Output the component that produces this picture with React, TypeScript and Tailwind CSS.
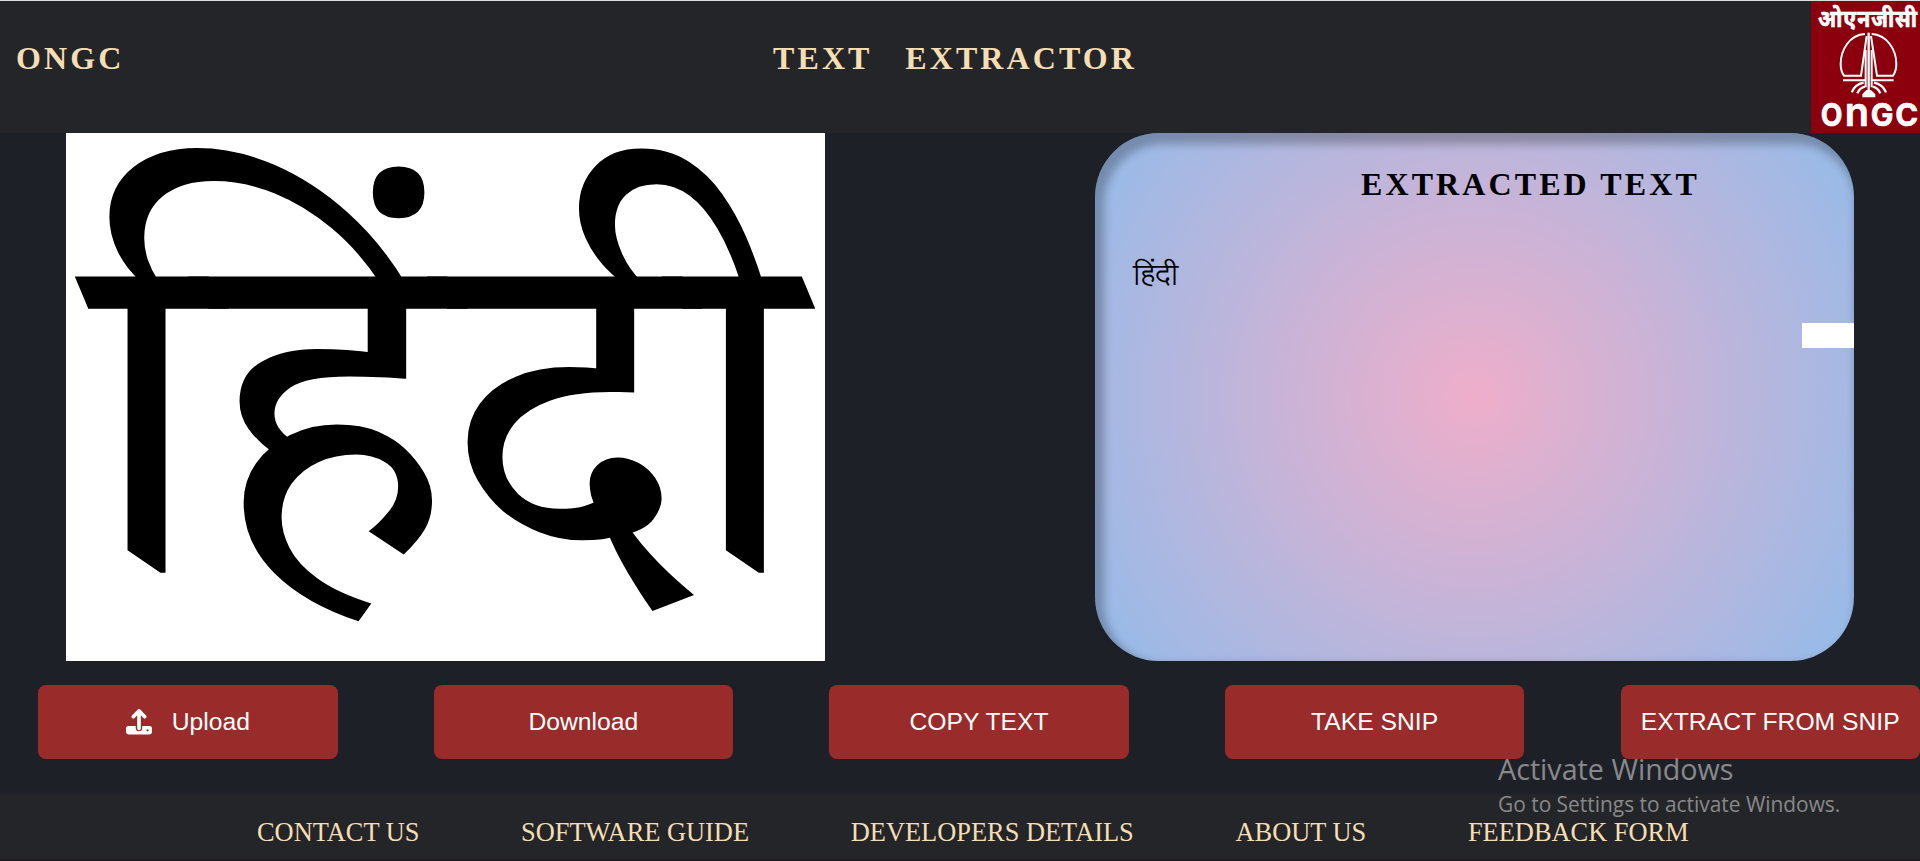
const navLinks = ["CONTACT US", "SOFTWARE GUIDE", "DEVELOPERS DETAILS", "ABOUT US", "FEEDBACK FORM"];
const actions = ["Upload", "Download", "COPY TEXT", "TAKE SNIP", "EXTRACT FROM SNIP"];

function UploadIcon() {
  return (
    <svg viewBox="0 0 26 26" className="h-[26px] w-[26px]" fill="none" aria-hidden="true">
      <path d="M2.500 17h21a2.500 2.500 0 0 1 2.500 2.500V22.500a3 3 0 0 1-3 3h-20a3 3 0 0 1-3-3v-3a2.500 2.500 0 0 1 2.500-2.500z" fill="#fff" />
      <path d="M13 3v16" stroke="#992b2b" strokeWidth="6.500" strokeLinecap="round" />
      <path d="M13 2v17.500M7.300 7.800 13 1.800 18.700 7.800" stroke="#fff" strokeWidth="3.600" strokeLinecap="round" strokeLinejoin="round" />
      <circle cx="21.500" cy="21.300" r="1.100" fill="#992b2b" />
    </svg>
  );
}

function Logo() {
  return (
    <svg viewBox="64 3 327 396" className="ml-auto h-[132px] w-[109px] shrink-0" aria-hidden="true">
      <rect x="64" y="3" width="327" height="396" fill="#8b000c" />
      <text x="85" y="81" fontSize="72" fontWeight="700" fill="#fff" stroke="#fff" strokeWidth="2" textLength="300" lengthAdjust="spacingAndGlyphs" fontFamily="'Noto Sans Devanagari','Noto Sans',sans-serif">ओएनजीसी</text>
      <g fill="none" stroke="#fff" strokeWidth="6">
        <path d="M226 102C180 104 153 150 153 192C153 207 158 220 163 227H214L231 108" />
        <path d="M246 102C292 104 320 150 320 192C320 207 315 220 310 227H262L244 108" />
        <path d="M160 241H226M248 241H312M228 150V262M246 150V262" />
        <path d="M237 98V275" strokeWidth="7" />
        <path d="M186 277Q196 253 222 248M203 280Q210 263 226 260M289 277Q279 253 253 248M272 280Q265 263 249 260" strokeWidth="7" />
      </g>
      <path d="M218 292V283L230 270H244L257 283V292Z" fill="#fff" />
      <g fontWeight="700" fill="#fff" stroke="#fff" strokeWidth="2" fontFamily="Inter,sans-serif">
        <text x="93" y="379" fontSize="94" textLength="68" lengthAdjust="spacingAndGlyphs">O</text>
        <text x="165" y="379" fontSize="122" fontWeight="600" textLength="76" lengthAdjust="spacingAndGlyphs">n</text>
        <text x="243" y="379" fontSize="94" textLength="71" lengthAdjust="spacingAndGlyphs">G</text>
        <text x="317" y="379" fontSize="94" textLength="72" lengthAdjust="spacingAndGlyphs">C</text>
      </g>
    </svg>
  );
}

export default function App() {
  return (
    <div className="relative flex h-[861px] w-[1920px] flex-col overflow-hidden bg-[#1e2028] font-['Liberation_Serif',serif]">
      <header className="flex h-[133px] shrink-0 items-start border-t border-[#dbe0e0] bg-[#242529] pl-4 text-[32px] font-bold leading-[36px] tracking-[3.1px] text-[#f5deb3]">
        <h1 className="w-[757px] pt-[39px]">ONGC</h1>
        <h2 className="whitespace-pre pt-[39px]">TEXT   EXTRACTOR</h2>
        <Logo />
      </header>

      <main className="flex h-[528px] shrink-0 justify-between px-[66px]">
        <div className="h-[528px] w-[759px] overflow-hidden bg-white">
          <svg viewBox="0 0 759 528" className="h-full w-full">
            <clipPath id="slant">
              <path d="M9 0H736V144L749 175V528H22V175L9 144Z" />
            </clipPath>
            <g clipPath="url(#slant)">
              <text x="18" y="437" fontSize="471" fontWeight="400" textLength="723" lengthAdjust="spacingAndGlyphs" fontFamily="'Noto Serif Devanagari','Noto Sans Devanagari','Noto Sans',sans-serif">हिंदी</text>
            </g>
          </svg>
        </div>
        <section className="flex w-[759px] flex-col rounded-[64px] bg-[radial-gradient(circle,#eeaeca_0%,#94bbe9_100%)] text-black shadow-[inset_5px_7px_8px_4px_rgba(0,0,0,0.25)]">
          <h2 className="pl-[266px] pt-[33px] text-[32px] font-bold leading-[36px] tracking-[3.1px]">EXTRACTED TEXT</h2>
          <p className="pl-[38px] pt-[52px] font-['Lohit_Devanagari','Noto_Sans_Devanagari','Noto_Sans',sans-serif] text-[29px] font-light leading-[45px]">हिंदी</p>
          <div className="mt-[24px] h-[25px] w-[52px] self-end bg-white" />
        </section>
      </main>

      <div className="flex h-[133px] shrink-0 justify-between pl-[38px] pt-6">
        {actions.map((label, i) => (
          <button key={label} className="flex h-[74px] w-[299.500px] items-center justify-center gap-5 whitespace-nowrap rounded-lg bg-[#992b2b] font-['Liberation_Sans',sans-serif] text-[24.7px] text-white">
            {i === 0 && <UploadIcon />}
            <span>{label}</span>
          </button>
        ))}
      </div>

      <footer className="flex flex-1 items-start gap-[101.700px] border-b-2 border-[#1f1a20] bg-[#242529] pl-[257px] pt-[23px] text-[26.4px] leading-[30px] text-[#f5deb3]">
        {navLinks.map((l) => (
          <a key={l} className="whitespace-nowrap">{l}</a>
        ))}
      </footer>

      <div className="pointer-events-none absolute left-[1498px] top-[749px] whitespace-nowrap font-['Open_Sans',sans-serif] text-[#88898b]">
        <p className="text-[28.7px] leading-[40px]">Activate Windows</p>
        <p className="text-[20.9px] leading-[30px]">Go to Settings to activate Windows.</p>
      </div>
    </div>
  );
}
